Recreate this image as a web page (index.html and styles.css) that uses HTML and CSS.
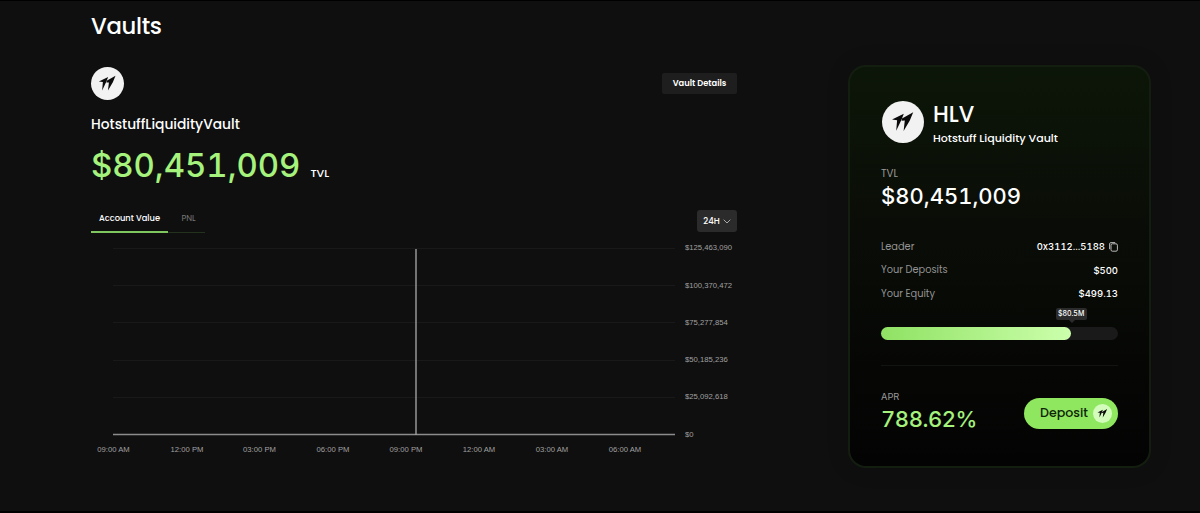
FILE: index.html
```html
<!DOCTYPE html>
<html lang="en">
<head>
    <meta charset="UTF-8">
    <meta name="viewport" content="width=device-width, initial-scale=1.0">
    <title>Vaults</title>
    <link rel="stylesheet" href="styles.css">
</head>
<body>
    <svg class="defs" width="0" height="0">
        <symbol id="logo" viewBox="0 0 42 42">
            <path d="M10 18.6L21.8 12.8L19.6 18.6L14.2 29.8L15.1 19.2Z"/>
            <path d="M20 17.6L31.2 11.2L27.8 19.4L21.6 30L22.8 19.6L19.6 19.8Z"/>
        </symbol>
    </svg>

    <main class="page">
        <section class="vault">
            <h1 class="title">Vaults</h1>
            <div class="vault-head">
                <span class="logo"><svg><use href="#logo"/></svg></span>
                <button class="details-btn">Vault Details</button>
            </div>
            <h2 class="vault-name">HotstuffLiquidityVault</h2>
            <div class="vault-value">
                <span class="amount num">$80,451,009</span>
                <span class="unit">TVL</span>
            </div>

            <div class="toolbar">
                <div class="tabs">
                    <button class="tab active">Account Value</button>
                    <button class="tab">PNL</button>
                </div>
                <button class="range-btn">24H
                    <svg width="8" height="5" viewBox="0 0 8 5"><path d="M0.7 0.7L4 4L7.3 0.7" fill="none" stroke="#aaa"/></svg>
                </button>
            </div>

            <svg class="chart" width="650" height="220" viewBox="0 0 650 220">
                <g class="grid">
                    <path d="M22 8.5H584M22 45.5H584M22 82.5H584M22 120.5H584M22 157.5H584"/>
                </g>
                <path class="axis" d="M22 194.5H584"/>
                <path class="series" d="M325 9V195"/>
                <g class="labels">
                    <text x="594" y="10">$125,463,090</text>
                    <text x="594" y="48">$100,370,472</text>
                    <text x="594" y="85">$75,277,854</text>
                    <text x="594" y="122">$50,185,236</text>
                    <text x="594" y="159">$25,092,618</text>
                    <text x="594" y="197">$0</text>
                </g>
                <g class="labels times">
                    <text x="22.5" y="212">09:00 AM</text>
                    <text x="96" y="212">12:00 PM</text>
                    <text x="168.5" y="212">03:00 PM</text>
                    <text x="242" y="212">06:00 PM</text>
                    <text x="315" y="212">09:00 PM</text>
                    <text x="388" y="212">12:00 AM</text>
                    <text x="461" y="212">03:00 AM</text>
                    <text x="534" y="212">06:00 AM</text>
                </g>
            </svg>
        </section>

        <aside class="card">
            <div class="card-head">
                <span class="logo large"><svg><use href="#logo"/></svg></span>
                <div>
                    <div class="symbol">HLV</div>
                    <div class="fullname">Hotstuff Liquidity Vault</div>
                </div>
            </div>
            <div class="caption">TVL</div>
            <div class="card-value num">$80,451,009</div>

            <dl class="stats">
                <dt>Leader</dt>
                <dd class="num">0x3112...5188
                    <svg width="9" height="10" viewBox="0 0 9 10" fill="none" stroke="#ccc" stroke-width="0.9"><rect x="2" y="1.8" width="6.4" height="7.4" rx="1.4"/><path d="M0.6 7.2V1.9Q0.6 0.6 1.9 0.6H6.2"/></svg>
                </dd>
                <dt>Your Deposits</dt>
                <dd class="num">$500</dd>
                <dt>Your Equity</dt>
                <dd class="num">$499.13</dd>
            </dl>

            <div class="progress">
                <div class="progress-fill" style="width: 80%">
                    <span class="tip num">$80.5M</span>
                </div>
            </div>

            <div class="card-foot">
                <div>
                    <div class="caption apr">APR</div>
                    <div class="apr-value num">788.62%</div>
                </div>
                <button class="deposit-btn">Deposit
                    <span class="logo small"><svg><use href="#logo"/></svg></span>
                </button>
            </div>
        </aside>
    </main>
</body>
</html>
```
FILE: styles.css
```css
* {
    box-sizing: border-box;
}

body {
    margin: 0;
    height: 513px;
    overflow: hidden;
    background: #0f0f0f;
    border-top: 1px solid #000;
    border-bottom: 2px solid #000;
    color: #fff;
    font-family: Poppins, Inter, sans-serif;
    font-weight: 500;
}

h1, h2, dl, dd {
    margin: 0;
    font-weight: 500;
}

button {
    border: none;
    padding: 0;
    font: inherit;
    color: inherit;
    cursor: pointer;
}

.num {
    font-family: Inter, sans-serif;
    font-variant-numeric: tabular-nums;
}

.defs {
    display: block;
}

.page {
    display: flex;
    justify-content: space-between;
    align-items: flex-start;
    padding: 9px 49px 0 91px;
}

.vault {
    width: 646px;
}

.title {
    font-size: 22.7px;
    line-height: 32px;
    letter-spacing: -0.3px;
}

.vault-head {
    display: flex;
    justify-content: space-between;
    align-items: center;
    margin-top: 25px;
}

.logo {
    display: block;
    width: 33px;
    height: 33px;
    border-radius: 50%;
    background: #f2f2f2;
    color: #0b0b0b;
}

.logo svg {
    display: block;
    width: 100%;
    height: 100%;
    fill: currentColor;
}

.logo.large {
    width: 42px;
    height: 42px;
}

.logo.small {
    width: 19px;
    height: 19px;
    background: #d3fcbc;
}

.details-btn {
    width: 75px;
    height: 21px;
    border-radius: 2px;
    background: #1e1e1e;
    font-size: 8.3px;
    font-weight: 600;
}

.vault-name {
    margin-top: 15px;
    font-size: 13.8px;
    line-height: 20px;
}

.vault-value {
    display: flex;
    align-items: baseline;
    gap: 10px;
    height: 44px;
    line-height: 44px;
    margin-top: 8px;
}

.amount {
    font-size: 32.9px;
    color: #a5f27d;
}

.unit {
    font-size: 11px;
}

.toolbar {
    display: flex;
    justify-content: space-between;
    margin-top: 23px;
}

.tabs {
    display: flex;
    height: 23px;
}

.tab {
    width: 37px;
    padding: 0 0 5px 4px;
    background: none;
    border-bottom: 1px solid #22321d;
    font-size: 8.3px;
    font-weight: 400;
    color: #777;
}

.tab.active {
    width: 77px;
    padding-left: 0;
    border-bottom: 2px solid #7fc65f;
    color: #fff;
    font-weight: 500;
}

.range-btn {
    display: flex;
    align-items: center;
    justify-content: center;
    gap: 3px;
    width: 40px;
    height: 22px;
    border-radius: 3px;
    background: #2b2b2b;
    font-size: 8.5px;
}

.chart {
    display: block;
    margin-top: 7px;
}

.grid {
    stroke: #191919;
}

.axis {
    stroke: #8c8c8c;
    stroke-width: 1.4;
}

.series {
    stroke: #a0a0a0;
    stroke-width: 1.4;
}

.labels {
    fill: #a0a0a0;
    font-family: "Liberation Sans", Arial, sans-serif;
    font-size: 7.7px;
    font-weight: 400;
}

.times {
    text-anchor: middle;
}

.card {
    width: 303px;
    height: 403px;
    margin-top: 55px;
    padding: 34px 31px 0;
    border: 2px solid #141e10;
    border-radius: 18px;
    background: linear-gradient(#0c1608, #0a0d07 40%, #060705 75%, #030303);
    box-shadow: 0 0 22px rgba(0, 0, 0, 0.15);
}

.card-head {
    display: flex;
    gap: 9px;
    height: 48px;
}

.card-head .logo {
    margin-left: 1px;
}

.symbol {
    font-size: 22.4px;
    line-height: 26px;
}

.fullname {
    font-size: 11.05px;
    line-height: 22px;
}

.caption {
    margin-top: 17px;
    font-size: 10.2px;
    font-weight: 400;
    line-height: 15px;
    color: #999;
}

.card-value {
    font-size: 22px;
    line-height: 31px;
}

.stats {
    display: grid;
    grid-template-columns: 1fr auto;
    grid-auto-rows: 23.6px;
    align-items: center;
    margin-top: 23px;
    font-size: 9.5px;
}

.stats dt {
    font-size: 9.8px;
    color: #949494;
    font-weight: 400;
}

.stats dd {
    display: flex;
    justify-content: flex-end;
    align-items: center;
    gap: 4px;
}

.progress {
    height: 13px;
    margin-top: 21px;
    border-radius: 7px;
    background: #1a1a1b;
}

.progress-fill {
    position: relative;
    height: 100%;
    border-radius: 7px;
    background: linear-gradient(90deg, #8fe263, #ccffac);
}

.tip {
    position: absolute;
    right: -16px;
    bottom: 20px;
    width: 31px;
    border-radius: 2px;
    background: #2b2b2b;
    font-size: 7px;
    line-height: 12px;
    text-align: center;
}

.tip::after {
    content: "";
    position: absolute;
    left: 13px;
    top: 12px;
    border: 3px solid transparent;
    border-top-color: #2b2b2b;
    border-bottom: none;
}

.card-foot {
    display: flex;
    justify-content: space-between;
    align-items: flex-start;
    margin-top: 25px;
    border-top: 1px solid #121411;
}

.caption.apr {
    margin-top: 23px;
    font-family: Inter, sans-serif;
    font-size: 9.3px;
}

.apr-value {
    font-size: 22px;
    line-height: 30px;
    letter-spacing: -0.02em;
    color: #a5f27d;
}

.deposit-btn {
    display: flex;
    align-items: center;
    justify-content: space-between;
    width: 94px;
    height: 31px;
    margin-top: 32px;
    padding: 0 6px 0 16px;
    border-radius: 16px;
    background: #8fe75f;
    color: #10240a;
    font-size: 12.6px;
}
```
